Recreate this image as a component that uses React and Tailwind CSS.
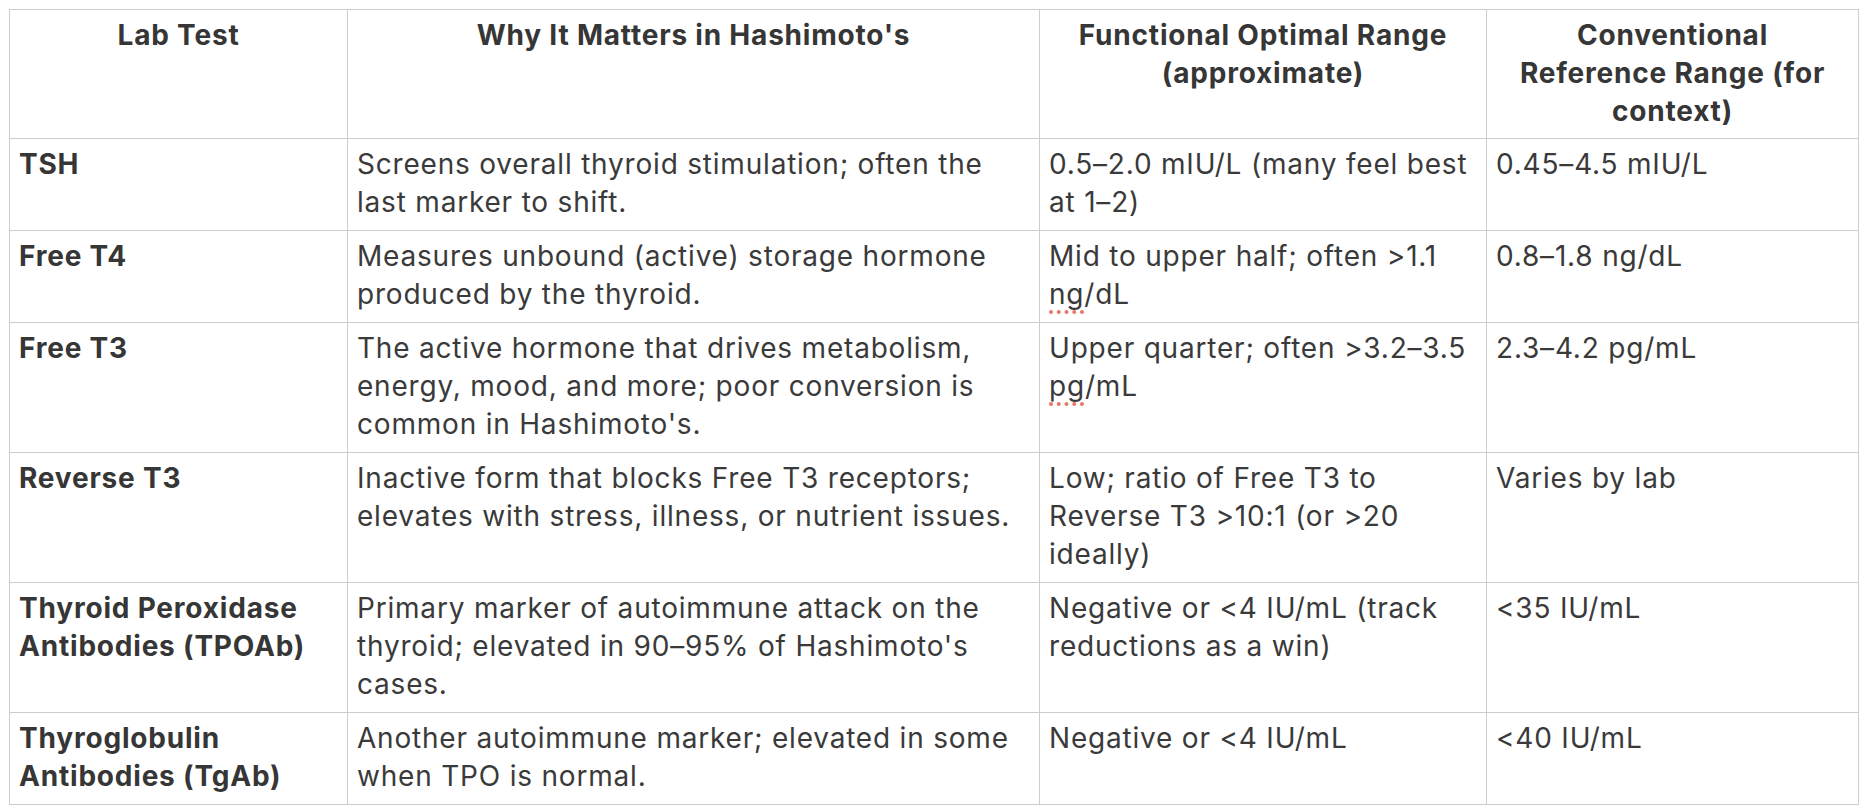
import React from 'react';

const headers = [
  "Lab Test",
  "Why It Matters in Hashimoto's",
  'Functional Optimal Range (approximate)',
  <>Conventional<br />Reference Range (for<br />context)</>,
];

const Flag = ({ children }) => (
  <span className="underline decoration-dotted decoration-[#e8776b] decoration-[4px] underline-offset-[6px]">{children}</span>
);

const rows = [
  {
    test: 'TSH',
    why: 'Screens overall thyroid stimulation; often the last marker to shift.',
    optimal: '0.5–2.0 mIU/L (many feel best at 1–2)',
    ref: '0.45–4.5 mIU/L',
  },
  {
    test: 'Free T4',
    why: 'Measures unbound (active) storage hormone produced by the thyroid.',
    optimal: <>Mid to upper half; often &gt;1.1 <Flag>ng</Flag>/dL</>,
    ref: '0.8–1.8 ng/dL',
  },
  {
    test: 'Free T3',
    why: "The active hormone that drives metabolism, energy, mood, and more; poor conversion is common in Hashimoto's.",
    optimal: <>Upper quarter; often &gt;3.2–3.5 <Flag>pg</Flag>/mL</>,
    ref: '2.3–4.2 pg/mL',
  },
  {
    test: 'Reverse T3',
    why: 'Inactive form that blocks Free T3 receptors; elevates with stress, illness, or nutrient issues.',
    optimal: 'Low; ratio of Free T3 to Reverse T3 >10:1 (or >20 ideally)',
    ref: 'Varies by lab',
  },
  {
    test: 'Thyroid Peroxidase Antibodies (TPOAb)',
    why: "Primary marker of autoimmune attack on the thyroid; elevated in 90–95% of Hashimoto's cases.",
    optimal: 'Negative or <4 IU/mL (track reductions as a win)',
    ref: '<35 IU/mL',
  },
  {
    test: 'Thyroglobulin Antibodies (TgAb)',
    why: 'Another autoimmune marker; elevated in some when TPO is normal.',
    optimal: 'Negative or <4 IU/mL',
    ref: '<40 IU/mL',
  },
];

export default function App() {
  const head = 'border border-[#cdcdcd] px-[9px] pt-[6px] pb-[8px] align-top';
  const cell = 'border border-[#cdcdcd] px-[9px] pt-[6px] pb-[9px] align-top';

  return (
    <div className="min-h-screen bg-white pl-[9px] pt-[9px] font-['Inter','Noto_Sans',sans-serif] text-[#3a3a3a] text-[28px] leading-[38px] tracking-[0.8px]">
      <table className="table-fixed border-collapse w-[1849px]">
        <colgroup>
          <col className="w-[338px]" />
          <col className="w-[692px]" />
          <col className="w-[447px]" />
          <col className="w-[372px]" />
        </colgroup>
        <thead>
          <tr>
            {headers.map((h, i) => (
              <th key={i} className={`${head} text-center font-bold text-[#363636]`}>
                {h}
              </th>
            ))}
          </tr>
        </thead>
        <tbody>
          {rows.map((r) => (
            <tr key={r.test}>
              <td className={`${cell} font-bold text-[#363636]`}>{r.test}</td>
              <td className={cell}>{r.why}</td>
              <td className={cell}>{r.optimal}</td>
              <td className={cell}>{r.ref}</td>
            </tr>
          ))}
        </tbody>
      </table>
    </div>
  );
}
